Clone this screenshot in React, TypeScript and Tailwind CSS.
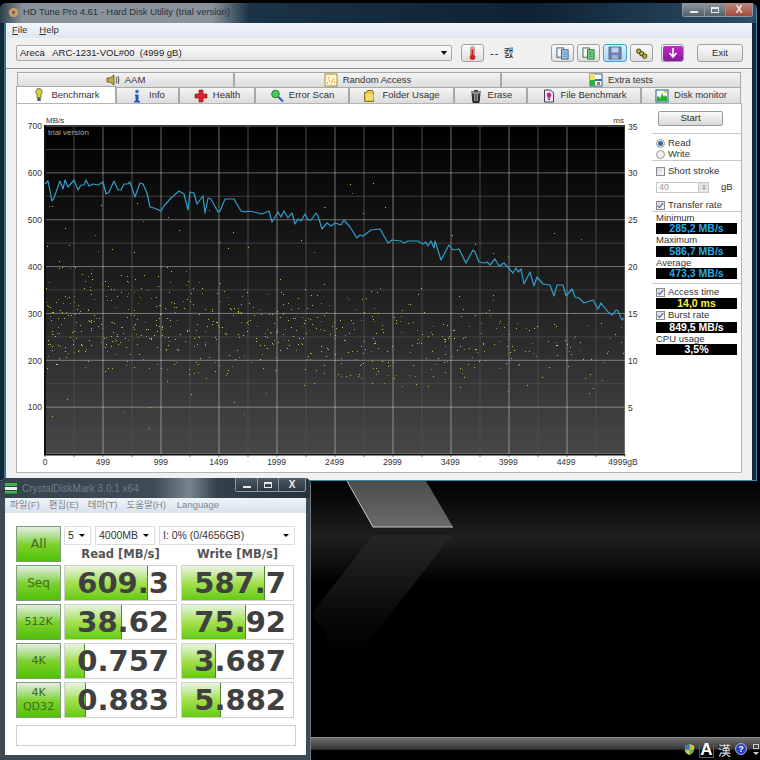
import React from "react";

const linePts =
  "44,183 47,180 51,200 53,197 59,180 62,188 64,179 67,186 73,179 77,189 80,184 83,184 85,179 88,185 92,183 97,184 102,181 105,193 108,191 113,180 117,189 120,189 123,183 127,183 129,181 134,196 139,182 142,183 146,192 149,206 153,207 160,210 163,205 170,197 178,190 183,193 187,209 189,191 193,192 196,203 202,195 204,212 207,197 210,198 217,211 219,210 224,198 233,198 240,210 244,211 247,210 253,211 261,213 268,210 271,221 277,211 280,216 283,210 287,217 291,212 294,223 297,218 300,220 304,213 307,219 310,219 315,212 317,215 321,228 326,222 330,225 334,222 340,224 343,219 349,226 356,237 359,234 362,235 370,229 379,228 387,242 391,239 400,240 403,242 407,240 417,240 422,243 425,241 427,245 430,240 433,247 434,240 440,259 448,244 452,249 458,248 465,262 472,249 474,251 478,261 483,262 486,261 489,264 494,258 498,265 503,262 512,272 515,267 517,271 520,268 523,283 529,271 533,285 536,276 542,283 549,284 553,295 556,284 562,284 565,295 571,288 574,296 578,297 583,302 592,299 597,308 600,302 607,311 611,314 615,309 617,310 621,319 623,317";

const sparseDots = [
  [48, 205], [51, 205], [64, 227], [94, 234], [100, 204], [136, 202], [142, 220], [167, 216], [178, 229], [208, 209],
  [232, 231], [300, 239], [323, 206], [46, 245], [68, 244], [97, 250], [111, 248], [133, 251], [219, 241], [227, 247],
  [247, 246], [313, 251], [349, 183], [372, 182], [351, 192], [384, 206], [362, 212], [324, 206], [451, 234], [553, 232],
  [580, 238], [474, 243], [492, 252], [507, 255], [51, 415], [66, 398], [122, 411], [148, 427], [149, 406], [243, 413], [233, 401], [190, 393], [265, 392],
];

// fixed seed so the cloud of access time dots stays the same between runs
function makeDots() {
  let seed = 1234567;
  const rnd = () => {
    seed = (seed * 16807) % 2147483647;
    return seed / 2147483647;
  };
  const out: number[][] = [...sparseDots];
  for (let i = 0; i < 1150; i++) {
    const x = 44 + rnd() * 580;
    const t = (x - 44) / 580;
    if (rnd() < t * 0.8) continue;
    const top = 250 + t * 55;
    const bottom = 384 + t * 10;
    const y = top + (rnd() + rnd() * 0.7) * 0.6 * (bottom - top);
    out.push([Math.round(x), Math.round(y)]);
  }
  return out;
}

const dots = makeDots();

const sans = "font-['Liberation_Sans',Arial,sans-serif]";

function Chart() {
  const rows = Array.from({ length: 15 }, (_, i) => 125 + i * 23.43);
  const cols = Array.from({ length: 21 }, (_, i) => 44 + i * 29);
  const yLeft = ["700", "600", "500", "400", "300", "200", "100"];
  const yRight = ["35", "30", "25", "20", "15", "10", "5"];
  const xLabels = ["0", "499", "999", "1499", "1999", "2499", "2999", "3499", "3999", "4499", "4999gB"];
  return (
    <svg viewBox="16 103 635 368" className="w-[635px] h-[368px] shrink-0" fontFamily="Liberation Sans, Arial, sans-serif" fontSize="8.5">
      <defs>
        <linearGradient id="plot" x1="0" y1="0" x2="0" y2="1">
          <stop offset="0" stopColor="#000000" />
          <stop offset="0.55" stopColor="#232323" />
          <stop offset="1" stopColor="#474747" />
        </linearGradient>
        <linearGradient id="minorV" gradientUnits="userSpaceOnUse" x1="0" y1="125" x2="0" y2="453">
          <stop offset="0" stopColor="#ffffff" stopOpacity="0.3" />
          <stop offset="1" stopColor="#ffffff" stopOpacity="0.04" />
        </linearGradient>
      </defs>
      <rect x="44" y="125" width="580" height="328" fill="url(#plot)" />
      {rows.map((y, i) => (
        <line key={i} x1="44" x2="624" y1={y} y2={y} stroke="#ffffff" strokeOpacity={i % 2 === 0 ? 0.38 : 0.24 - i * 0.014} />
      ))}
      {cols.map((x, i) =>
        i % 2 === 0 ? (
          <line key={i} x1={x} x2={x} y1="125" y2="453" stroke="#ffffff" strokeOpacity="0.42" />
        ) : (
          <rect key={i} x={x - 0.5} y="125" width="1" height="328" fill="url(#minorV)" />
        )
      )}
      {cols.map((x, i) => (
        <line key={i} x1={x} x2={x} y1="453" y2="456" stroke="#777" />
      ))}
      <rect x="43" y="124" width="581" height="2" fill="#3a3a3a" />
      <rect x="43" y="124" width="2" height="330" fill="#111" />
      <rect x="43" y="453" width="581" height="1.5" fill="#111" />
      {dots.map(([x, y], i) => (
        <rect key={i} x={x} y={y} width="1" height="1" fill="#c8d040" opacity={i % 3 === 0 ? 0.6 : 0.95} />
      ))}
      <polyline points={linePts} fill="none" stroke="#2f9fcb" strokeWidth="1.2" strokeLinejoin="round" />
      <text x="47" y="134" fill="#a8a8a8" fontSize="8">trial version</text>
      <text x="45" y="122" fill="#333" fontSize="8">MB/s</text>
      <text x="623" y="122" fill="#333" fontSize="8" textAnchor="end">ms</text>
      {yLeft.map((t, i) => (
        <text key={t} x="41" y={128 + i * 46.9} textAnchor="end" fill="#333">{t}</text>
      ))}
      {yRight.map((t, i) => (
        <text key={t} x="627" y={128.5 + i * 46.9} fill="#333">{t}</text>
      ))}
      {xLabels.map((t, i) => (
        <text key={t} x={i === 10 ? 622 : 44 + i * 57.9} y="464" textAnchor="middle" fill="#333">{t}</text>
      ))}
    </svg>
  );
}

function Ico({ children }: { children: React.ReactNode }) {
  return <svg viewBox="0 0 14 14" className="w-[14px] h-[14px] shrink-0">{children}</svg>;
}

const tabIcons: Record<string, React.ReactNode> = {
  aam: (
    <Ico>
      <path d="M1 5h3l4-3v10L4 9H1z" fill="#c9b040" stroke="#4a4a20" strokeWidth="0.8" />
      <path d="M10 4q2 3 0 6M12 3q2 4 0 8" fill="none" stroke="#444" strokeWidth="0.9" />
    </Ico>
  ),
  random: (
    <Ico>
      <rect x="1" y="1" width="12" height="12" fill="#fff6c8" stroke="#a08a40" />
      <path d="M3 10h1M5 8h1M7 10h1M9 6h1M4 5h1M8 8h1M10 9h1" stroke="#c07020" />
    </Ico>
  ),
  extra: (
    <Ico>
      <rect x="1" y="1" width="12" height="12" fill="#fff" stroke="#2a6a90" />
      <rect x="1" y="1" width="5" height="6" fill="#f0e070" />
      <rect x="1" y="7" width="5" height="6" fill="#30b040" />
      <rect x="6" y="6" width="7" height="2" fill="#3070c0" />
      <rect x="8" y="9" width="3" height="3" fill="#e06040" />
    </Ico>
  ),
  bench: (
    <Ico>
      <path d="M7 0.5a3.2 3.2 0 0 1 2 5.7V9.5H5V6.2A3.2 3.2 0 0 1 7 0.5z" fill="#d6d040" stroke="#5a6020" strokeWidth="0.8" />
      <rect x="5.3" y="10" width="3.4" height="3" fill="#555" />
    </Ico>
  ),
  info: (
    <Ico>
      <circle cx="7" cy="2.5" r="1.8" fill="#2a70d0" />
      <path d="M5 5.5h3.5V12H10v1.5H4V12h1.5V7H5z" fill="#1a5ac0" />
    </Ico>
  ),
  health: (
    <Ico>
      <path d="M5 1h4v4h4v4H9v4H5V9H1V5h4z" fill="#d8222a" stroke="#8a1015" strokeWidth="0.6" />
    </Ico>
  ),
  scan: (
    <Ico>
      <circle cx="5.5" cy="5" r="3.8" fill="#50c860" stroke="#1e7a30" />
      <path d="M8.5 8l4.5 4.5" stroke="#3a5ab0" strokeWidth="2.2" />
    </Ico>
  ),
  folder: (
    <Ico>
      <path d="M1.5 3.5h2l1-2h5l1 2v9h-9z" fill="#e8c640" stroke="#6a5a10" strokeWidth="0.8" />
      <rect x="3.5" y="5" width="7" height="6" fill="#f4dc70" />
    </Ico>
  ),
  erase: (
    <Ico>
      <path d="M2 3h10M3 4.5l1 9h6l1-9" fill="#333" stroke="#222" />
      <path d="M5.5 5v7M7 5v7M8.5 5v7" stroke="#bbb" strokeWidth="0.7" />
      <rect x="5" y="1" width="4" height="1.5" fill="#333" />
    </Ico>
  ),
  file: (
    <Ico>
      <path d="M2.5 1h6l3 3v9h-9z" fill="#f3e6f5" stroke="#4a3a50" />
      <path d="M7 3.5a2.4 2.4 0 0 1 1.4 4.3V9H5.6V7.8A2.4 2.4 0 0 1 7 3.5z" fill="#b02a90" />
      <rect x="5.8" y="9.6" width="2.4" height="1.4" fill="#444" />
    </Ico>
  ),
  disk: (
    <Ico>
      <rect x="1" y="1" width="12" height="12" fill="#fff" stroke="#205a80" />
      <path d="M2 12V8l2-1 1 3 2-6 2 4 1-2 2 2v4z" fill="#22b030" />
      <rect x="9" y="2" width="3" height="2" fill="#e8d040" />
    </Ico>
  ),
};

function TopTab({ w, icon, label }: { w: string; icon: string; label: string }) {
  return (
    <div className={`${w} h-[15px] flex items-center justify-center gap-[5px] border border-b-0 border-[#a8a8a8] bg-gradient-to-b from-[#f4f4f4] to-[#dcdcdc] text-[9.5px] text-[#333]`}>
      {tabIcons[icon]}
      <span>{label}</span>
    </div>
  );
}

const Tab2 = ({ w, icon, label, active }: { w: string; icon: string; label: string; active?: boolean }) => (
  <div
    className={`${w} flex items-center justify-center gap-[5px] border border-b-0 border-[#a8a8a8] text-[9.5px] text-[#333] ${
      active ? "h-[17px] -mt-[1px] bg-white" : "h-[16px] bg-gradient-to-b from-[#f4f4f4] to-[#dcdcdc]"
    }`}
  >
    {tabIcons[icon]}
    <span>{label}</span>
  </div>
);

function ToolBtn({ w = "w-[23px]", blue, children }: { w?: string; blue?: boolean; children: React.ReactNode }) {
  return (
    <div
      className={`${w} h-[18px] shrink-0 rounded-[3px] flex items-center justify-center text-[9.5px] text-[#333] border ${
        blue ? "border-[#4aa0cc] bg-gradient-to-b from-[#dff2fb] to-[#a8d8ef]" : "border-[#a0a0a0] bg-gradient-to-b from-[#fbfbfb] to-[#dedede]"
      }`}
    >
      {children}
    </div>
  );
}

function Check({ label, h }: { label: string; h: string }) {
  return (
    <div className={`${h} flex items-center pl-[4px] gap-[3px] text-[9.5px] text-[#333]`}>
      <div className="w-[9px] h-[9px] border border-[#8a8a8a] bg-gradient-to-br from-[#d8d8e4] to-[#fafafa] flex items-center justify-center">
        <svg viewBox="0 0 9 9" className="w-[7px] h-[7px]">
          <path d="M1 4.5l2.2 2.5L8 1.5" fill="none" stroke="#4a5fa0" strokeWidth="1.4" />
        </svg>
      </div>
      <span>{label}</span>
    </div>
  );
}

function Radio({ label, on }: { label: string; on?: boolean }) {
  return (
    <div className="h-[11px] flex items-center pl-[4px] gap-[3px] text-[9.5px] text-[#333]">
      <div className="w-[9px] h-[9px] rounded-full border border-[#9a9a9a] bg-[#eeeeee] flex items-center justify-center">
        {on && <div className="w-[5px] h-[5px] rounded-full bg-[#2d6f94]" />}
      </div>
      <span>{label}</span>
    </div>
  );
}

const Sep = ({ className = "" }: { className?: string }) => <div className={`h-px bg-[#c8c8c8] ${className}`} />;

function Value({ text, color }: { text: string; color: string }) {
  return (
    <div className={`ml-[4px] w-[81px] h-[11px] bg-black flex items-center justify-center text-[10.5px] font-bold leading-none ${color}`}>
      {text}
    </div>
  );
}

const Lbl = ({ text, h }: { text: string; h: string }) => (
  <div className={`${h} pl-[4px] text-[9.5px] leading-[11px] text-[#333]`}>{text}</div>
);

function SidePanel() {
  return (
    <div className="w-[89px] flex flex-col">
      <div className="mt-[7px] ml-[6px] w-[65px] h-[15px] rounded-[2px] border border-[#9a9a9a] bg-gradient-to-b from-[#fbfbfb] to-[#d8d8d8] flex items-center justify-center text-[9.5px] text-[#333]">
        Start
      </div>
      <Sep className="mt-[7px]" />
      <div className="mt-[4px]"><Radio label="Read" on /></div>
      <Radio label="Write" />
      <Sep />
      <div className="mt-[4px] h-[12px] flex items-center pl-[4px] gap-[3px] text-[9.5px] text-[#333]">
        <div className="w-[9px] h-[9px] border border-[#8a8a8a] bg-gradient-to-br from-[#d8d8e4] to-[#fafafa]" />
        <span>Short stroke</span>
      </div>
      <div className="mt-[5px] h-[11px] flex items-center pl-[4px]">
        <div className="w-[53px] h-[11px] border border-[#c8c8c8] flex items-center justify-between pl-[2px] text-[9px] text-[#999]">
          <span>40</span>
          <div className="w-[10px] h-[9px] bg-[#e4e4e4] border-l border-[#c8c8c8] flex flex-col items-center justify-center gap-[1px]">
            <div className="w-0 h-0 border-x-[2px] border-x-transparent border-b-[2px] border-b-[#999]" />
            <div className="w-0 h-0 border-x-[2px] border-x-transparent border-t-[2px] border-t-[#999]" />
          </div>
        </div>
        <span className="ml-[12px] text-[9.5px] text-[#333]">gB</span>
      </div>
      <div className="mt-[6px]"><Check label="Transfer rate" h="h-[12px]" /></div>
      <Sep />
      <Lbl text="Minimum" h="h-[11px]" />
      <Value text="285,2 MB/s" color="text-[#2ba6e0]" />
      <Lbl text="Maximum" h="h-[12px]" />
      <Value text="586,7 MB/s" color="text-[#2ba6e0]" />
      <Lbl text="Average" h="h-[11px]" />
      <Value text="473,3 MB/s" color="text-[#2ba6e0]" />
      <Sep className="mt-[4px]" />
      <div className="mt-[2px]"><Check label="Access time" h="h-[12px]" /></div>
      <Value text="14,0 ms" color="text-[#f4f040]" />
      <Check label="Burst rate" h="h-[13px]" />
      <Value text="849,5 MB/s" color="text-white" />
      <Lbl text="CPU usage" h="h-[11px]" />
      <Value text="3,5%" color="text-white" />
    </div>
  );
}

function CaptionButtons({ glass }: { glass?: boolean }) {
  const plain = glass ? "bg-gradient-to-b from-[#8d979f] to-[#56626c]" : "bg-gradient-to-b from-[#4e5a64] to-[#2e3840]";
  return (
    <div className="flex h-[14px] rounded-b-[3px] border border-t-0 border-[#8d99a4] overflow-hidden">
      <div className={`w-[22px] border-r border-[#8a949e] flex items-center justify-center ${plain}`}>
        <div className="w-[8px] h-[2px] mt-[4px] bg-[#e8e8e8]" />
      </div>
      <div className={`w-[21px] border-r border-[#8a949e] flex items-center justify-center ${plain}`}>
        <div className="w-[8px] h-[6px] border border-t-2 border-[#e8e8e8]" />
      </div>
      <div className={`w-[26px] flex items-center justify-center text-[10px] font-bold leading-none text-[#eeeeee] ${glass ? "bg-gradient-to-b from-[#b98a84] to-[#a5473c]" : plain}`}>
        X
      </div>
    </div>
  );
}

function HdTune() {
  return (
    <div className={`absolute left-0 top-[3px] w-[757px] h-[478px] flex flex-col rounded-t-[6px] bg-[#102a3a] border-r border-b border-[#3d8aa8] ${sans}`}>
      <div className="h-[20px] shrink-0 flex items-start justify-between rounded-t-[6px] bg-[linear-gradient(90deg,#2c3e4c_0,#8a939b_3%,#8a939b_28%,#1a3346_33%,#0e2232_70%,#2c4e68_100%)] pl-[8px] pr-[3px]">
        <div className="flex items-center gap-[4px] h-[18px]">
          <svg viewBox="0 0 12 12" className="w-[11px] h-[11px]">
            <circle cx="6" cy="6" r="5" fill="#c8a060" />
            <circle cx="6" cy="6" r="1.6" fill="#555" />
          </svg>
          <span className="text-[9.4px] text-[#2a3138]">HD Tune Pro 4.61 - Hard Disk Utility (trial version)</span>
        </div>
        <CaptionButtons glass />
      </div>
      <div className="ml-[4px] w-[748px] flex-1 flex flex-col bg-[#f0f0f0] border-l-[2px] border-[#3d6f8c]">
        <div className="h-[15px] shrink-0 flex items-center gap-[12px] pl-[6px] text-[9.5px] text-[#333] bg-gradient-to-b from-[#f2f6fa] to-[#dfe7f0]">
          <span><u>F</u>ile</span>
          <span><u>H</u>elp</span>
        </div>
        <div className="h-[31px] shrink-0 flex items-center pl-[10px] border-b border-[#909090]">
          <div className="w-[436px] h-[16px] shrink-0 rounded-[2px] border border-[#a8a8a8] bg-gradient-to-b from-[#fbfbfb] to-[#e4e4e4] flex items-center justify-between pl-[3px] pr-[4px] text-[9.5px] text-[#222]">
            <span className="whitespace-pre">Areca   ARC-1231-VOL#00  (4999 gB)</span>
            <div className="w-0 h-0 border-x-[3px] border-x-transparent border-t-[4px] border-t-black" />
          </div>
          <div className="ml-[9px]">
            <ToolBtn>
              <svg viewBox="0 0 14 16" className="w-[13px] h-[16px]">
                <rect x="5" y="1" width="4" height="10" rx="2" fill="#d8b0a8" stroke="#8a5a50" strokeWidth="0.6" />
                <rect x="6" y="4" width="2" height="8" fill="#d02020" />
                <circle cx="7" cy="12.5" r="3" fill="#d02020" />
              </svg>
            </ToolBtn>
          </div>
          <div className="ml-[6px] w-[61px] shrink-0 text-[11px] tracking-[1px] text-[#222] font-['Liberation_Sans','Noto_Sans_CJK_KR',sans-serif]">-- 캜</div>
          <div className="flex items-center gap-[3px]">
            <ToolBtn>
              <svg viewBox="0 0 14 14" className="w-[13px] h-[13px]">
                <rect x="1" y="1" width="7" height="10" fill="#f4f4f4" stroke="#3a5a80" />
                <rect x="6" y="3" width="7" height="10" fill="#a8cdea" stroke="#3a5a80" />
                <path d="M7.5 6h4M7.5 8h4M7.5 10h4" stroke="#3a6aa0" strokeWidth="0.7" />
              </svg>
            </ToolBtn>
            <ToolBtn>
              <svg viewBox="0 0 14 14" className="w-[13px] h-[13px]">
                <rect x="1" y="1" width="7" height="10" fill="#f4f4f4" stroke="#3a6a50" />
                <rect x="6" y="3" width="7" height="10" fill="#7ccf8a" stroke="#2a6a40" />
                <path d="M7.5 6h4M7.5 8h4M7.5 10h4" stroke="#1f7a40" strokeWidth="0.7" />
              </svg>
            </ToolBtn>
            <ToolBtn w="w-[24px]" blue>
              <svg viewBox="0 0 14 14" className="w-[14px] h-[14px]">
                <path d="M1 1h12v12H1z" fill="#7082b4" stroke="#54649a" />
                <rect x="3.5" y="1.5" width="7" height="5" fill="#c4d0e8" />
                <rect x="4" y="9" width="6" height="4" fill="#a4b0d0" />
              </svg>
            </ToolBtn>
            <ToolBtn>
              <svg viewBox="0 0 14 14" className="w-[15px] h-[13px]">
                <circle cx="4" cy="4.5" r="2.4" fill="#c2a830" stroke="#3a3a18" strokeWidth="1" />
                <circle cx="7.2" cy="7.2" r="2.4" fill="#c2a830" stroke="#3a3a18" strokeWidth="1" />
                <circle cx="10.4" cy="9.8" r="2.4" fill="#c2a830" stroke="#3a3a18" strokeWidth="1" />
              </svg>
            </ToolBtn>
            <div className="ml-[5px]">
              <ToolBtn>
                <div className="w-[20px] h-[15px] rounded-[2px] bg-gradient-to-b from-[#c02ac8] to-[#8a1a98] flex items-center justify-center">
                  <svg viewBox="0 0 12 12" className="w-[12px] h-[12px]">
                    <path d="M6 1v8M2.5 6L6 10l3.5-4" fill="none" stroke="#fff" strokeWidth="1.6" />
                  </svg>
                </div>
              </ToolBtn>
            </div>
            <div className="ml-[10px]">
              <ToolBtn w="w-[46px]">Exit</ToolBtn>
            </div>
          </div>
        </div>
        <div className="mt-[3px] pl-[11px] flex">
          <TopTab w="w-[217px]" icon="aam" label="AAM" />
          <TopTab w="w-[267px]" icon="random" label="Random Access" />
          <TopTab w="w-[240px]" icon="extra" label="Extra tests" />
        </div>
        <div className="pl-[10px] flex items-end h-[16px]">
          <Tab2 w="w-[100px]" icon="bench" label="Benchmark" active />
          <Tab2 w="w-[63px]" icon="info" label="Info" />
          <Tab2 w="w-[76px]" icon="health" label="Health" />
          <Tab2 w="w-[94px]" icon="scan" label="Error Scan" />
          <Tab2 w="w-[105px]" icon="folder" label="Folder Usage" />
          <Tab2 w="w-[73px]" icon="erase" label="Erase" />
          <Tab2 w="w-[114px]" icon="file" label="File Benchmark" />
          <Tab2 w="w-[100px]" icon="disk" label="Disk monitor" />
        </div>
        <div className="ml-[10px] w-[726px] h-[370px] flex bg-white border border-[#b4b4b4]">
          <Chart />
          <SidePanel />
        </div>
      </div>
    </div>
  );
}

const results = [
  { label: ["Seq"], read: "609.3", readPct: 75, write: "587.7", writePct: 75 },
  { label: ["512K"], read: "38.62", readPct: 51, write: "75.92", writePct: 58 },
  { label: ["4K"], read: "0.757", readPct: 18, write: "3.687", writePct: 31 },
  { label: ["4K", "QD32"], read: "0.883", readPct: 19, write: "5.882", writePct: 35 },
];

const cdmFont = "font-['DejaVu_Sans',sans-serif]";

function GreenBtn({ lines, size }: { lines: string[]; size: string }) {
  return (
    <div className={`w-[45px] h-[36px] shrink-0 border border-[#7f9c78] bg-gradient-to-b from-[#e6ece2] via-[#7fd22c] to-[#4fc000] flex flex-col items-center justify-center leading-[14px] text-[#3f6a22] ${size} ${cdmFont}`}>
      {lines.map((l) => (
        <span key={l}>{l}</span>
      ))}
    </div>
  );
}

function Bar({ value, pct }: { value: string; pct: number }) {
  return (
    <div className="relative w-[113px] h-[36px] pt-[1px] border border-[#cfcfcf] bg-white flex items-center justify-end pr-[7px]">
      <div
        className="absolute left-0 top-0 bottom-0 bg-gradient-to-b from-[#eaf3e0] via-[#a4e04c] to-[#62cb08] border-r border-[#4f8a28]"
        style={{ width: `${pct}%` }}
      />
      <span className={`relative text-[29px] font-bold leading-none text-[#404040] ${cdmFont}`}>{value}</span>
    </div>
  );
}

function Select({ w, text }: { w: string; text: string }) {
  return (
    <div className={`${w} h-[19px] border border-[#dcdcdc] bg-white flex items-center justify-between pl-[3px] pr-[5px] text-[10.5px] text-[#333]`}>
      <span>{text}</span>
      <div className="w-0 h-0 border-x-[3px] border-x-transparent border-t-[3px] border-t-black" />
    </div>
  );
}

function Cdm() {
  return (
    <div className={`absolute left-0 top-[478px] w-[311px] h-[282px] flex flex-col rounded-t-[6px] bg-[#3c4a55] border-r border-[#6a7a86] ${sans}`}>
      <div className="h-[20px] shrink-0 flex items-start justify-between rounded-t-[6px] bg-[linear-gradient(90deg,#35434e_0,#3e4c57_50%,#76858e_61%,#33414b_70%,#26323b_100%)] pl-[5px] pr-[4px]">
        <div className="flex items-center gap-[5px] h-[20px]">
          <svg viewBox="0 0 12 12" className="w-[12px] h-[12px]">
            <rect x="0" y="1" width="12" height="3" fill="#3ab84a" />
            <rect x="0" y="5" width="12" height="3" fill="#f0f0f0" />
            <rect x="0" y="9" width="12" height="2.5" fill="#3ab84a" />
          </svg>
          <span className="text-[10px] text-[#727e86]">CrystalDiskMark 3.0.1 x64</span>
        </div>
        <CaptionButtons />
      </div>
      <div className="ml-[5px] w-[301px] h-[257px] flex flex-col bg-white">
        <div className="h-[15px] shrink-0 flex items-center gap-[9px] pl-[5px] text-[9.5px] text-[#7d8690] bg-gradient-to-b from-[#eef3f8] to-[#d9e3ee] font-['Liberation_Sans','Noto_Sans_CJK_KR',sans-serif]">
          <span>파일(F)</span>
          <span>편집(E)</span>
          <span>테마(T)</span>
          <span>도움말(H)</span>
          <span className="ml-[2px]">Language</span>
        </div>
        <div className="pt-[13px] pl-[11px] flex flex-col gap-[3px]">
          <div className="flex gap-[3px]">
            <GreenBtn lines={["All"]} size="text-[13px]" />
            <div className="flex flex-col">
              <div className="flex gap-[4px]">
                <Select w="w-[27px]" text="5" />
                <Select w="w-[60px]" text="4000MB" />
                <Select w="w-[136px]" text="I: 0% (0/4656GB)" />
              </div>
              <div className={`flex gap-[4px] h-[17px] pt-[3px] items-center text-[11.5px] font-bold text-[#555] ${cdmFont}`}>
                <div className="w-[113px] text-center">Read [MB/s]</div>
                <div className="w-[113px] text-center">Write [MB/s]</div>
              </div>
            </div>
          </div>
          {results.map((r) => (
            <div key={r.read} className="flex gap-[3px]">
              <GreenBtn lines={r.label} size={r.label[0] === "Seq" ? "text-[12px]" : "text-[11px]"} />
              <div className="flex gap-[4px]">
                <Bar value={r.read} pct={r.readPct} />
                <Bar value={r.write} pct={r.writePct} />
              </div>
            </div>
          ))}
          <div className="mt-[4px] w-[280px] h-[21px] border border-[#cfcfcf]" />
        </div>
      </div>
    </div>
  );
}

function Wallpaper() {
  return (
    <svg viewBox="311 481 449 256" className="absolute left-[311px] top-[481px] w-[449px] h-[256px]">
      <defs>
        <linearGradient id="glow" x1="0" y1="0" x2="0" y2="1">
          <stop offset="0" stopColor="#000" />
          <stop offset="0.22" stopColor="#1f1f1f" />
          <stop offset="0.4" stopColor="#000" />
        </linearGradient>
        <linearGradient id="slab" x1="0" y1="0" x2="0" y2="1">
          <stop offset="0" stopColor="#4c4c4c" />
          <stop offset="1" stopColor="#6a6a6a" />
        </linearGradient>
        <linearGradient id="refl" x1="0" y1="0" x2="0" y2="1">
          <stop offset="0" stopColor="#262626" />
          <stop offset="0.45" stopColor="#111111" />
          <stop offset="1" stopColor="#000" stopOpacity="0" />
        </linearGradient>
      </defs>
      <rect x="311" y="481" width="449" height="256" fill="url(#glow)" />
      <path d="M347 481H426L453 527H373z" fill="url(#slab)" />
      <path d="M347 481L373 527H453" fill="none" stroke="#c8c8c8" strokeWidth="1" />
      <path d="M373 535H452L347 670 312 613z" fill="url(#refl)" />
    </svg>
  );
}

function Taskbar() {
  return (
    <div className="absolute left-[311px] right-0 top-[737px] h-[23px] flex items-center justify-end gap-[3px] pr-[1px] bg-gradient-to-b from-[#6e6e6e] via-[#383838] via-50% to-black to-60% border-t border-[#8a8a8a]">
      <svg viewBox="0 0 14 14" className="w-[13px] h-[13px]">
        <path d="M7 1l5 2v4q0 4-5 6-5-2-5-6V3z" fill="#5fa860" />
        <path d="M7 1l5 2v4H7zM7 7v6q-5-2-5-6z" fill="#d8c040" />
        <path d="M2 3l5-2v6H2z" fill="#3a7ac0" />
      </svg>
      <div className="w-[15px] h-[17px] flex items-center justify-center border border-[#5a5a5a] text-[17px] font-bold leading-none text-white font-['Liberation_Sans',sans-serif]">
        A
      </div>
      <div className="w-[15px] h-[17px] flex items-center justify-center text-[13px] leading-none text-[#dcdcdc] font-['Noto_Sans_CJK_KR',sans-serif]">
        漢
      </div>
      <div className="w-[12px] h-[12px] rounded-full bg-[#2a3ec0] border border-[#a0b0e0] flex items-center justify-center text-[9px] font-bold leading-none text-white font-['Liberation_Sans',sans-serif]">
        ?
      </div>
      <div className="w-[7px] ml-[2px] flex flex-col items-center gap-[3px]">
        <div className="w-[6px] h-[5px] border border-[#cccccc]" />
        <div className="w-0 h-0 border-x-[3px] border-x-transparent border-t-[3px] border-t-[#cccccc]" />
      </div>
    </div>
  );
}

export default function App() {
  return (
    <div className="relative w-[760px] h-[760px] bg-black overflow-hidden">
      <Wallpaper />
      <Taskbar />
      <HdTune />
      <Cdm />
    </div>
  );
}
